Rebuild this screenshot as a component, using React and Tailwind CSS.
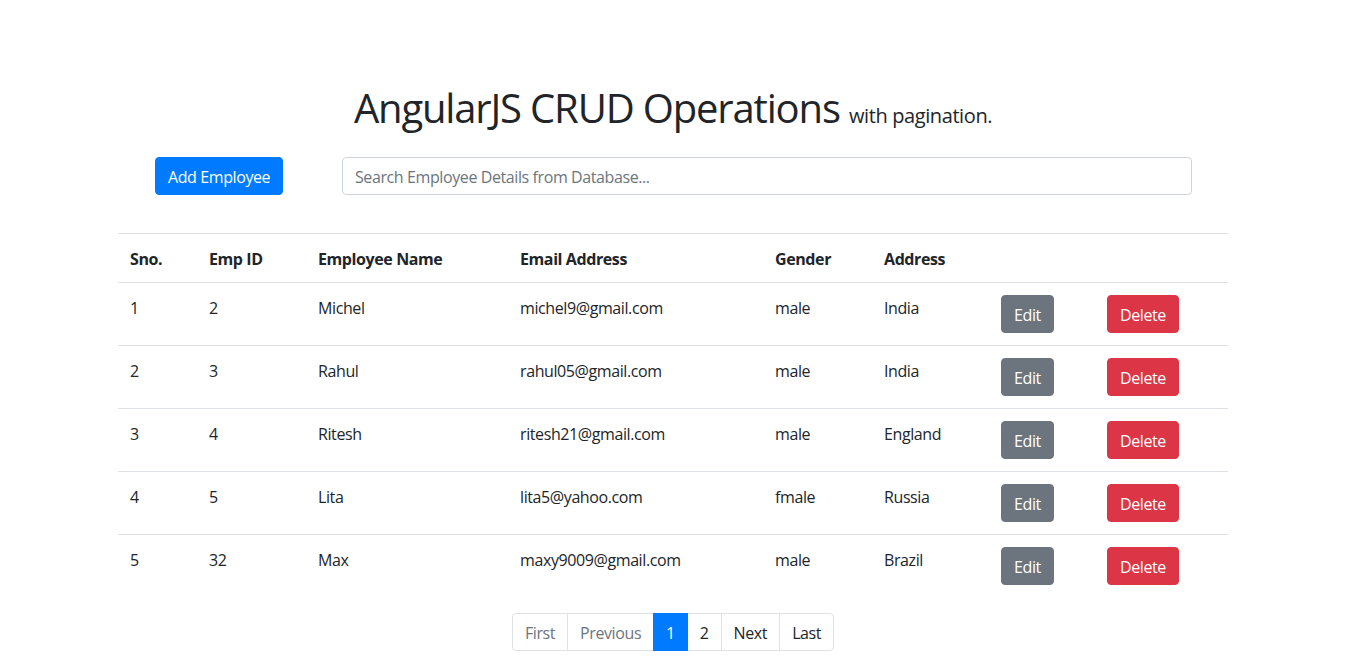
const employees = [
  { sno: 1, id: 2, name: 'Michel', email: 'michel9@gmail.com', gender: 'male', address: 'India' },
  { sno: 2, id: 3, name: 'Rahul', email: 'rahul05@gmail.com', gender: 'male', address: 'India' },
  { sno: 3, id: 4, name: 'Ritesh', email: 'ritesh21@gmail.com', gender: 'male', address: 'England' },
  { sno: 4, id: 5, name: 'Lita', email: 'lita5@yahoo.com', gender: 'fmale', address: 'Russia' },
  { sno: 5, id: 32, name: 'Max', email: 'maxy9009@gmail.com', gender: 'male', address: 'Brazil' },
];

const headers = [
  { label: 'Sno.', w: 'w-[79px]' },
  { label: 'Emp ID', w: 'w-[109px]' },
  { label: 'Employee Name', w: 'w-[202px]' },
  { label: 'Email Address', w: 'w-[255px]' },
  { label: 'Gender', w: 'w-[109px]' },
  { label: 'Address', w: 'w-[117px]' },
  { label: '', w: 'w-[106px]' },
  { label: '', w: 'w-[133px]' },
];

const pages = [
  { label: 'First', state: 'disabled' },
  { label: 'Previous', state: 'disabled' },
  { label: '1', state: 'active' },
  { label: '2', state: 'normal' },
  { label: 'Next', state: 'normal' },
  { label: 'Last', state: 'normal' },
];

const cell = 'border-t border-[#dee2e6] px-3 pt-[13px] pb-[11px] align-top';
const btnCell = 'border-t border-[#dee2e6] p-3 align-top';

const App = () => {
  return (
    <div className="min-h-screen bg-white font-['Open_Sans',sans-serif] text-[16px] leading-6 tracking-[-0.025em] text-[#212529]">
      <div className="px-[118px] pt-[84px]">
        <div className="w-[1110px]">
          <h1 className="text-center text-[40px] leading-[1.2] font-normal tracking-[-0.029em]">
            AngularJS CRUD Operations{' '}
            <small className="text-[20px] tracking-[-0.02em]">with pagination.</small>
          </h1>

          <div className="mt-[25px] flex items-center">
            <div className="w-[224px] pl-[37px]">
              <button className="h-[38px] rounded px-3 pt-[2px] bg-[#007bff] text-white border border-[#007bff]">
                Add Employee
              </button>
            </div>
            <input
              type="text"
              placeholder="Search Employee Details from Database..."
              className="h-[38px] w-[850px] rounded border border-[#ced4da] px-3 pt-[2px] placeholder:text-[#6c757d] outline-none"
            />
          </div>

          <table className="mt-[38px] w-full table-fixed border-collapse">
            <thead>
              <tr>
                {headers.map((h, i) => (
                  <th key={i} className={`${h.w} ${cell} text-left font-bold`}>
                    {h.label}
                  </th>
                ))}
              </tr>
            </thead>
            <tbody>
              {employees.map((e) => (
                <tr key={e.sno}>
                  <td className={cell}>{e.sno}</td>
                  <td className={cell}>{e.id}</td>
                  <td className={cell}>{e.name}</td>
                  <td className={cell}>{e.email}</td>
                  <td className={cell}>{e.gender}</td>
                  <td className={cell}>{e.address}</td>
                  <td className={btnCell}>
                    <button className="h-[38px] rounded px-3 pt-[2px] bg-[#6c757d] text-white border border-[#6c757d]">Edit</button>
                  </td>
                  <td className={btnCell}>
                    <button className="h-[38px] rounded px-3 pt-[2px] bg-[#dc3545] text-white border border-[#dc3545]">Delete</button>
                  </td>
                </tr>
              ))}
            </tbody>
          </table>

          <ul className="mt-4 flex justify-center">
            {pages.map((p, i) => (
              <li
                key={p.label}
                className={joinClasses(
                  'border px-3 pt-[9px] pb-[7px] leading-5',
                  i > 0 ? '-ml-px' : 'rounded-l',
                  i === pages.length - 1 ? 'rounded-r' : '',
                  p.state === 'active'
                    ? 'bg-[#007bff] border-[#007bff] text-white relative z-10'
                    : p.state === 'disabled'
                    ? 'border-[#dee2e6] text-[#6c757d] bg-white'
                    : 'border-[#dee2e6] text-[#212529] bg-white'
                )}
              >
                {p.label}
              </li>
            ))}
          </ul>
        </div>
      </div>
    </div>
  );
};

function joinClasses(...parts) {
  return parts.filter(Boolean).join(' ');
}

export default App;
